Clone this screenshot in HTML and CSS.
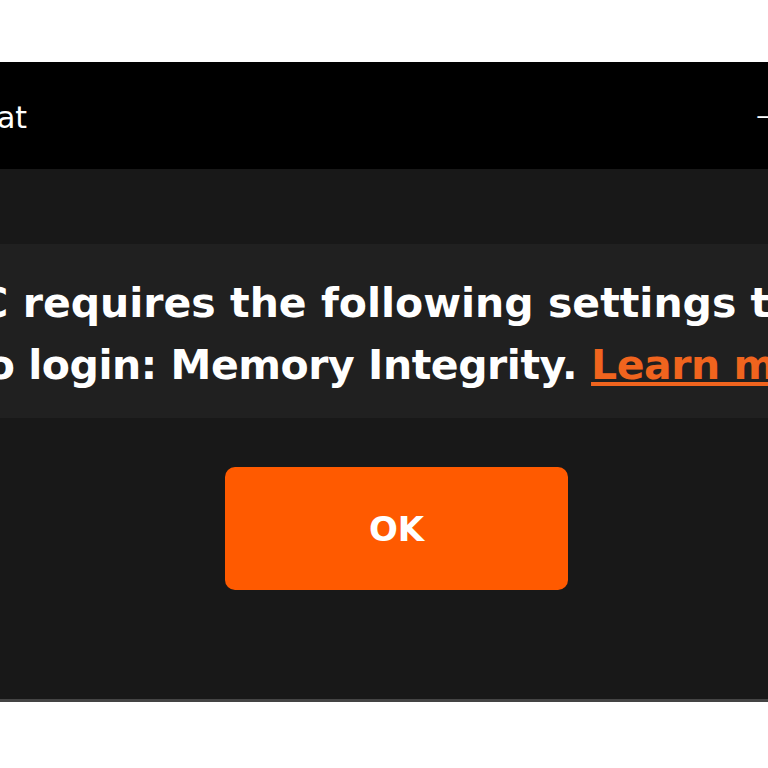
FILE: index.html
```html
<!DOCTYPE html>
<html>
<head>
    <title>FACEIT Anti-Cheat</title>
    <meta name="viewport" content="width=device-width, initial-scale=1.0">
    <link rel="stylesheet" href="styles.css">
</head>
<body>
    <div class="window">
        <header class="titlebar">
            <span class="title">FACEIT Anti-Cheat</span>
            <span class="controls">&#8212; &#10005;</span>
        </header>

        <div class="content">
            <div class="message">
                <p class="line line1">FACEIT AC requires the following settings to be disabled</p>
                <p class="line line2">in order to login: Memory Integrity. <a href="#">Learn more</a></p>
            </div>
            <button class="ok" type="button">OK</button>
        </div>
    </div>
</body>
</html>
```

FILE: styles.css
```css
body{
  margin:0;
  background:#fff;
  overflow:hidden;
  font-family:"DejaVu Sans", "Liberation Sans", sans-serif;
}
.window{
  margin-top:62px;
  height:637px;
  background:#181818;
  border-bottom:3px solid #444;
}
.titlebar{
  height:107px;
  background:#000;
  color:#fff;
  display:flex;
  align-items:center;
  justify-content:space-between;
  overflow:hidden;
}
.title{
  font-size:30px;
  white-space:nowrap;
  margin-left:-243px;
  padding-top:4px;
}
.controls{
  font-size:24px;
  white-space:nowrap;
  margin-right:-40px;
}
.content{
  padding-top:75px;
}
.message{
  background:#202020;
  height:174px;
  padding-top:28px;
  box-sizing:border-box;
  overflow:hidden;
}
.line{
  margin:0;
  color:#fff;
  font-size:41px;
  font-weight:bold;
  line-height:62px;
  white-space:nowrap;
}
.line1{
  margin-left:-224px;
}
.line2{
  margin-left:-226px;
  letter-spacing:-0.45px;
}
.line a{
  color:#f0641e;
  text-decoration:underline;
}
.ok{
  display:block;
  margin:49px 0 0 225px;
  width:343px;
  height:123px;
  background:#ff5a00;
  color:#fff;
  border:none;
  border-radius:10px;
  font-family:"DejaVu Sans", "Liberation Sans", sans-serif;
  font-size:34px;
  font-weight:bold;
}
```
